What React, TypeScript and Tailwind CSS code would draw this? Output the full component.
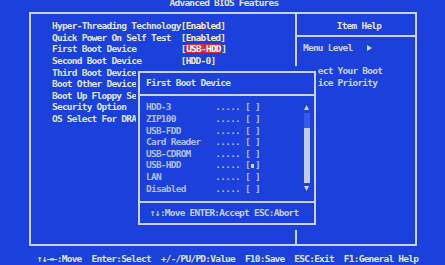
const mono =
  "font-['DejaVu_Sans_Mono',monospace] font-bold text-[9.5px] tracking-[-0.77px] leading-[11.6px] whitespace-pre";

// rows from index 4 on sit behind the popup: only 17 columns of their labels show
const rows: { label: string; value?: string; selected?: boolean }[] = [
  { label: "Hyper-Threading Technology", value: "[Enabled]" },
  { label: "Quick Power On Self Test", value: "[Enabled]" },
  { label: "First Boot Device", value: "USB-HDD", selected: true },
  { label: "Second Boot Device", value: "[HDD-0]" },
  { label: "Third Boot Device" },
  { label: "Boot Other Device" },
  { label: "Boot Up Floppy Seek" },
  { label: "Security Option" },
  { label: "OS Select For DRAM > 64MB" },
];

const devices = ["HDD-3", "ZIP100", "USB-FDD", "Card Reader", "USB-CDROM", "USB-HDD", "LAN", "Disabled"];

function Triangle({ dir }: { dir: "up" | "down" | "right" }) {
  const d = dir === "up" ? "M2.5 0L5 5H0Z" : dir === "down" ? "M0 0H5L2.5 5Z" : "M0 0L5 3L0 6Z";
  return (
    <svg viewBox={dir === "right" ? "0 0 5 6" : "0 0 5 5"} className={dir === "right" ? "w-[5px] h-[6px]" : "w-[5px] h-[5px]"} fill="#cfd6f2">
      <path d={d} />
    </svg>
  );
}

export default function App() {
  return (
    <div className={`relative w-[445px] h-[265px] overflow-hidden bg-[#1c40db] text-[#dfe4f7] flex flex-col ${mono}`}>
      {/* title */}
      <div className="h-[14.6px] -mt-[2.6px] pl-[3px] text-center">Advanced BIOS Features</div>

      {/* main frame */}
      <div className="ml-[29px] w-[388px] h-[236px] border-2 border-[#c9d2f2] flex">
        <div className="w-[264px] pl-[21px] pt-[6.4px]">
          {rows.map((r, i) => (
            <div key={r.label} className="h-[11.6px]">
              {i < 4 ? (
                r.label.padEnd(26)
              ) : (
                <span className="inline-block w-[84px] overflow-hidden align-top">{r.label.slice(0, 17)}</span>
              )}
              {r.selected ? (
                <span className="text-[#f2ecc6]">
                  [<span className="inline-block leading-[9px] px-[0.5px] bg-[#d42a3e] text-white">{r.value}</span>]
                </span>
              ) : (
                r.value && <span className="text-[#f2ecc6]">{r.value}</span>
              )}
            </div>
          ))}
        </div>
        <div className="flex-1 border-l-2 border-[#c9d2f2] flex flex-col">
          <div className="pt-[6.4px] pb-[3px] pl-[6px] text-center border-b-2 border-[#c9d2f2]">Item Help</div>
          <div className="mt-[5.4px] pl-[6px] text-[#c9d2f2]">
            <div className="h-[11.6px] flex items-center">
              {"Menu Level   "}
              <Triangle dir="right" />
            </div>
            <div className="h-[11.6px]" />
            <div className="h-[11.6px] pl-[14.8px]">ect Your Boot</div>
            <div className="h-[11.6px] pl-[14.8px]">ice Priority</div>
          </div>
        </div>
      </div>

      {/* status bar */}
      <div className="mt-[7px] pl-[37px]">
        {"↑↓→←:Move  Enter:Select  +/-/PU/PD:Value  F10:Save  ESC:Exit  F1:General Help"}
      </div>

      {/* popup */}
      <div className="absolute left-[136px] top-[66px] w-[181px] h-[164px] bg-[#1c40db] pl-[2px] pt-[5px]">
        <div className="w-[178px] h-[154px] border-2 border-[#c9d2f2] flex flex-col">
          <div className="pt-[4.4px] pl-[6px] text-[#dfe4f7]">First Boot Device</div>
          <div className="mt-[5px] h-[2px] bg-[#c9d2f2]" />
          <div className="mt-[5.4px] flex justify-between">
            <div className="pl-[6px] text-[#afbeee]">
              {devices.map((d) => (
                <div key={d} className="h-[11.6px]">
                  {d.padEnd(14)}
                  {"..... ["}
                  {d === "USB-HDD" ? (
                    <span className="inline-flex w-[4.95px] justify-center">
                      <span className="inline-block w-[3px] h-[4px] bg-[#cfd6f2]" />
                    </span>
                  ) : (
                    " "
                  )}
                  {"]"}
                </div>
              ))}
            </div>
            <div className="w-[7px] mr-[4px] flex flex-col items-center">
              <div className="h-[11.6px] flex items-center">
                <Triangle dir="up" />
              </div>
              <div className="h-[69.6px] w-[6px] bg-[#3a5ae4]">
                <div className="mt-[15px] h-[54.6px] bg-[#c3cbe9]" />
              </div>
              <div className="h-[11.6px] flex items-center">
                <Triangle dir="down" />
              </div>
            </div>
          </div>
          <div className="mt-[6.5px] h-[2px] bg-[#c9d2f2]" />
          <div className="mt-[4.4px] pl-[10px] text-[#c4cff2]">{"↑↓:Move ENTER:Accept ESC:Abort"}</div>
        </div>
      </div>
    </div>
  );
}
